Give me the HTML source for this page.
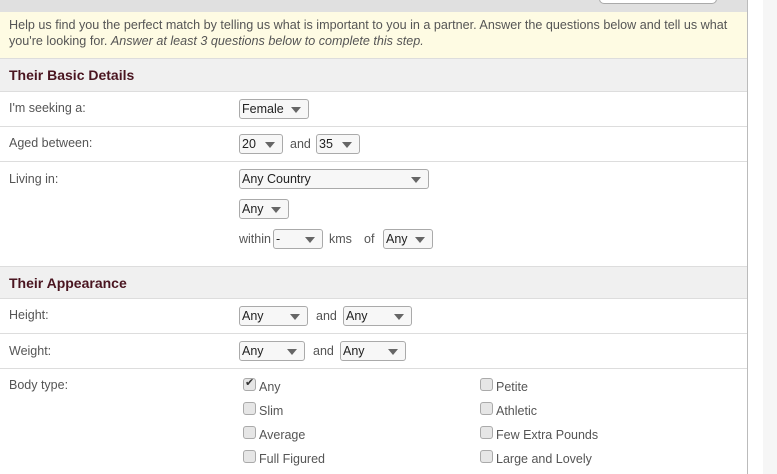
<!DOCTYPE html>
<html><head><meta charset="utf-8"><style>
*{margin:0;padding:0;box-sizing:border-box}
body{width:777px;height:474px;overflow:hidden;background:#fff;font-family:"Liberation Sans",sans-serif;font-size:12.5px;color:#555;position:relative}
.a{position:absolute}
.panel{left:0;top:0;width:748px;height:474px;border-right:1px solid #bbb;background:#fff}
.side{left:763px;top:0;width:14px;height:474px;background:#f6f6f6}
.top{left:0;top:0;width:747px;height:12px;background:#e0e0e0}
.btn{left:599px;top:-10px;width:118px;height:14px;background:#fff;border:1px solid #aaa;border-radius:5px}
.info{left:0;top:12px;width:747px;height:47px;background:#fefbe3;border-bottom:1px solid #ddd;padding:5px 9px;line-height:16px;font-size:12.6px;color:#555}
.hd{left:0;width:747px;height:33px;background:#f0f0f0;border-bottom:1px solid #ddd;padding:8px 9px;font-weight:bold;font-size:14px;color:#4a1520}
.ln{left:0;width:747px;height:1px;background:#ddd}
.lb{left:9px;font-size:12.5px;color:#555}
.sel{position:absolute;height:20px;border:1px solid #aaa;border-radius:3px;background:#f7f7f7;color:#222;font-size:12.5px;padding:2px 2px;line-height:14px}
.sel:after{content:"";position:absolute;right:7px;top:7px;border-left:5px solid transparent;border-right:5px solid transparent;border-top:6px solid #666}
.t{position:absolute;font-size:12.5px;color:#555}
.cb{position:absolute;width:13px;height:13px;border:1px solid #aaa;border-radius:3px;background:#e6e6e6}
</style></head><body>
<div class="a panel"></div>
<div class="a side"></div>
<div class="a top"></div>
<div class="a btn"></div>
<div class="a info">Help us find you the perfect match by telling us what is important to you in a partner. Answer the questions below and tell us what<br>you're looking for. <i>Answer at least 3 questions below to complete this step.</i></div>
<div class="a hd" style="top:59px">Their Basic Details</div>
<div class="a lb" style="top:101px">I'm seeking a:</div>
<div class="sel" style="left:239px;top:99px;width:70px">Female</div>
<div class="a ln" style="top:126px"></div>
<div class="a lb" style="top:136px">Aged between:</div>
<div class="sel" style="left:239px;top:134px;width:44px">20</div>
<div class="t" style="left:290px;top:137px">and</div>
<div class="sel" style="left:316px;top:134px;width:44px">35</div>
<div class="a ln" style="top:161px"></div>
<div class="a lb" style="top:172px">Living in:</div>
<div class="sel" style="left:239px;top:169px;width:190px">Any Country</div>
<div class="sel" style="left:239px;top:199px;width:50px">Any</div>
<div class="t" style="left:239px;top:232px">within</div>
<div class="sel" style="left:273px;top:229px;width:50px">-</div>
<div class="t" style="left:329px;top:232px">kms</div>
<div class="t" style="left:364px;top:232px">of</div>
<div class="sel" style="left:383px;top:229px;width:50px">Any</div>
<div class="a hd" style="top:266px;border-top:1px solid #ddd;height:33px">Their Appearance</div>
<div class="a lb" style="top:308px">Height:</div>
<div class="sel" style="left:239px;top:306px;width:69px">Any</div>
<div class="t" style="left:316px;top:309px">and</div>
<div class="sel" style="left:343px;top:306px;width:69px">Any</div>
<div class="a ln" style="top:333px"></div>
<div class="a lb" style="top:344px">Weight:</div>
<div class="sel" style="left:239px;top:341px;width:66px">Any</div>
<div class="t" style="left:313px;top:344px">and</div>
<div class="sel" style="left:340px;top:341px;width:66px">Any</div>
<div class="a ln" style="top:368px"></div>
<div class="a lb" style="top:378px">Body type:</div>
<div class="cb" style="left:243px;top:378px"><span style="position:absolute;left:1px;top:-3px;font-size:11px;color:#333">✔</span></div><div class="t" style="left:259px;top:380px">Any</div>
<div class="cb" style="left:243px;top:402px"></div><div class="t" style="left:259px;top:404px">Slim</div>
<div class="cb" style="left:243px;top:426px"></div><div class="t" style="left:259px;top:428px">Average</div>
<div class="cb" style="left:243px;top:450px"></div><div class="t" style="left:259px;top:452px">Full Figured</div>
<div class="cb" style="left:480px;top:378px"></div><div class="t" style="left:496px;top:380px">Petite</div>
<div class="cb" style="left:480px;top:402px"></div><div class="t" style="left:496px;top:404px">Athletic</div>
<div class="cb" style="left:480px;top:426px"></div><div class="t" style="left:496px;top:428px">Few Extra Pounds</div>
<div class="cb" style="left:480px;top:450px"></div><div class="t" style="left:496px;top:452px">Large and Lovely</div>
</body></html>
